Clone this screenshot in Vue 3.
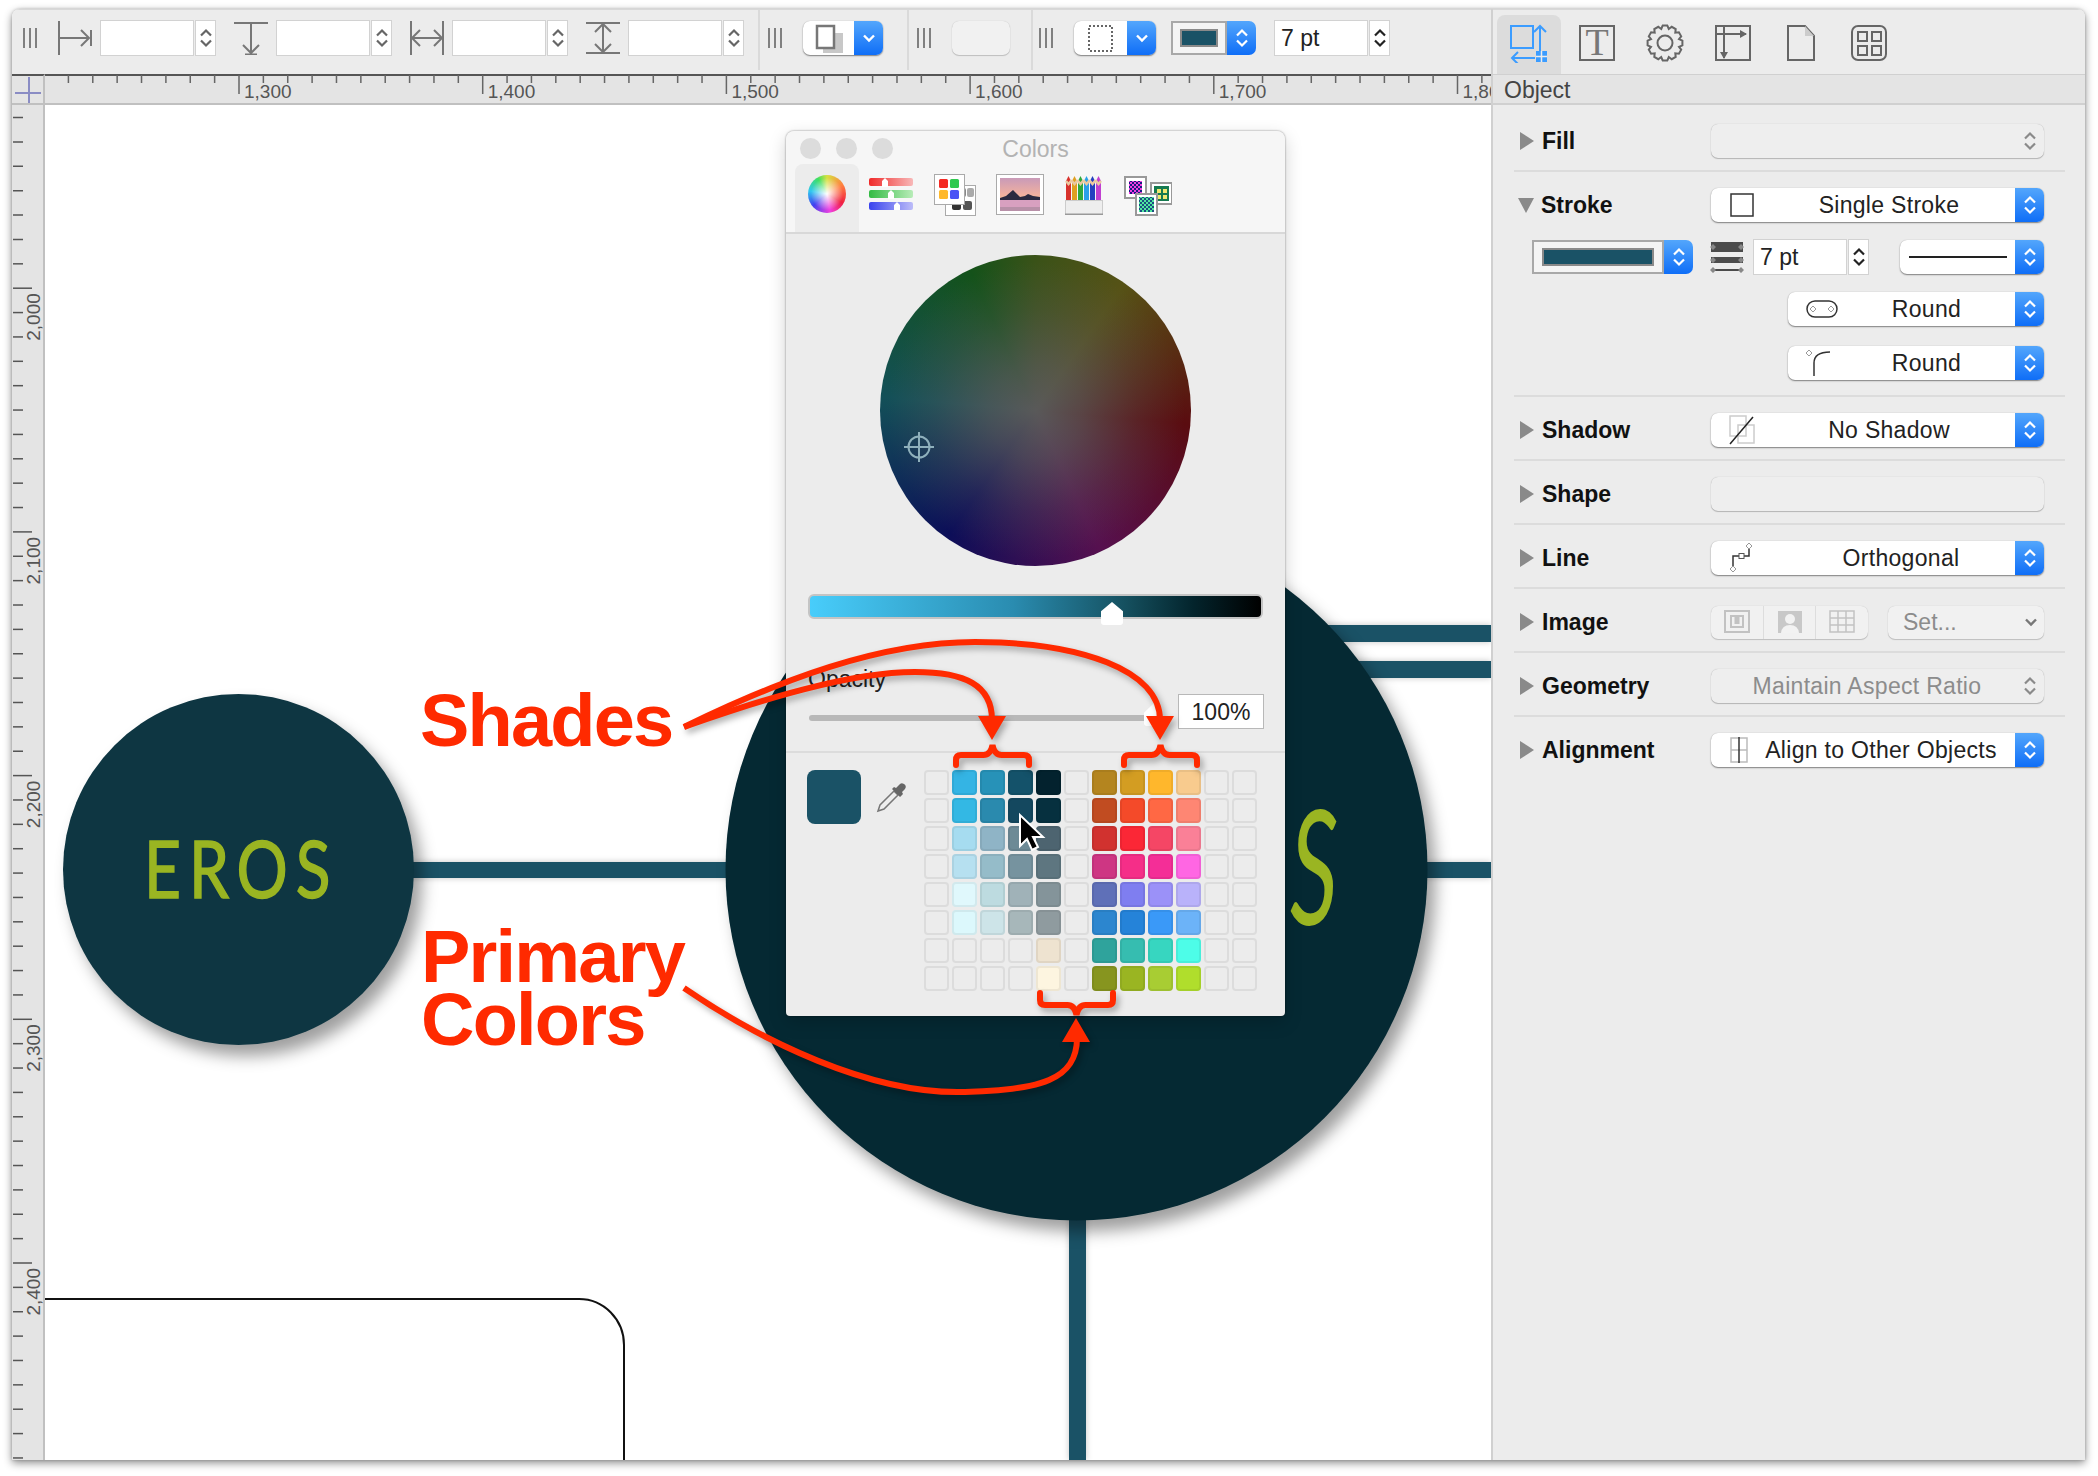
<script setup>
const rulerScale = 2.437

const hTicks = []
for (let u = 1230; u <= 1820; u += 10) {
  hTicks.push({ u, x: 239 + (u - 1300) * rulerScale, major: u % 100 === 0 })
}

const vTicks = []
for (let u = 1930; u <= 2480; u += 10) {
  vTicks.push({ u, y: 1263 + (u - 2400) * rulerScale, major: u % 100 === 0 })
}

const fmt = (n) => n.toLocaleString('en-US')

const spinFields = ['left', 'top', 'width', 'height']

const swatches = [
  ['', '#34b4e4', '#2792b8', '#14526a', '#03222e', '', '#b4851f', '#d39d22', '#ffb72c', '#f8cb8e', '', ''],
  ['', '#33b8e4', '#2a8aae', '#14485f', '#06303f', '', '#c14c21', '#f44a29', '#ff6844', '#fe8673', '', ''],
  ['', '#a6dcf0', '#8fb4c6', '#6d8a96', '#4d6470', '', '#d1322f', '#fb2736', '#f54665', '#fa8097', '', ''],
  ['', '#b6e0f0', '#95bcc9', '#76939f', '#5e7680', '', '#ce3683', '#f52e88', '#f42e97', '#ff66e3', '', ''],
  ['', '#e0f8fc', '#bddbe0', '#a0b2b8', '#84949a', '', '#5f70b8', '#7f7ef0', '#9b91f8', '#b9b2fa', '', ''],
  ['', '#dcf8fc', '#cde4e8', '#a7b7ba', '#8f9b9f', '', '#2c86cf', '#2583d9', '#3a99f8', '#6cb3f8', '', ''],
  ['', '', '', '', '#eee3d0', '', '#2fa39c', '#36bdb0', '#37d6c0', '#4dfde8', '', ''],
  ['', '', '', '', '#fdf5e0', '', '#87951f', '#9ab522', '#a8cd33', '#b0de2c', '', ''],
].flat()

// 12 tooth gear for the inspector tab
function gearPath() {
  const pts = []
  for (let i = 0; i < 12; i++) {
    const a = (i * Math.PI) / 6
    const step = Math.PI / 24
    const p = (r, t) => `${(20 + r * Math.sin(t)).toFixed(1)} ${(20 - r * Math.cos(t)).toFixed(1)}`
    pts.push(p(14.5, a - step * 2), p(17.5, a - step), p(17.5, a + step), p(14.5, a + step * 2))
  }
  return `M${pts.join('L')}Z`
}

function brace(c, half, tip, mid, end) {
  const x0 = c - half
  const x1 = c + half
  const d = mid > end ? 1 : -1
  return `M${x0} ${end}V${mid - d * 5}Q${x0} ${mid} ${x0 + 5} ${mid}H${c - 9}Q${c - 2} ${mid} ${c} ${tip}Q${c + 2} ${mid} ${c + 9} ${mid}H${x1 - 5}Q${x1} ${mid} ${x1} ${mid - d * 5}V${end}`
}

const gear = gearPath()
const braces = [brace(992.5, 36.5, 745, 755, 765), brace(1160.5, 36.5, 745, 755, 765), brace(1076.5, 36.5, 1015, 1005, 993)]
</script>

<template>
  <div class="page">
    <svg class="defs" width="0" height="0">
      <symbol id="updown" viewBox="0 0 16 24">
        <path d="M3 9.500 8 4.500l5 5M3 14.500l5 5 5-5" fill="none" stroke="currentColor" stroke-width="2.200" />
      </symbol>
      <symbol id="chevdown" viewBox="0 0 16 16">
        <path d="M3 5.500 8 10.500l5-5" fill="none" stroke="currentColor" stroke-width="2.400" />
      </symbol>
    </svg>

    <div class="window">
      <div class="main">
        <div class="toolbar">
          <span class="handle" />
          <div v-for="name in spinFields" :key="name" class="spin-group">
            <svg class="tool-icon" width="34" height="34" viewBox="0 0 34 34">
              <g v-if="name === 'left'" fill="none" stroke="#777" stroke-width="2">
                <path d="M1 0v34M1 17h30M23 9l8 8-8 8M33 9v16" />
              </g>
              <g v-else-if="name === 'top'" fill="none" stroke="#777" stroke-width="2">
                <path d="M0 2h34M17 2v30M9 24l8 8 8-8M11 33.500h12" />
              </g>
              <g v-else-if="name === 'width'" fill="none" stroke="#777" stroke-width="2">
                <path d="M1 0v34M33 0v34M2 17h30M10 9l-8 8 8 8M24 9l8 8-8 8" />
              </g>
              <g v-else fill="none" stroke="#777" stroke-width="2">
                <path d="M0 2h34M0 32h34M17 3v28M9 11l8-8 8 8M9 23l8 8 8-8" />
              </g>
            </svg>
            <span class="field" />
            <span class="stepper"><svg width="16" height="32"><use href="#updown" /></svg></span>
          </div>
          <span class="sep sep-first" />
          <span class="handle handle-gap" />
          <div class="popup tool-popup">
            <span class="popup-face">
              <svg width="30" height="30" viewBox="0 0 30 30">
                <rect x="9" y="10" width="20" height="20" fill="#c8c8c8" />
                <rect x="3" y="3" width="17" height="22" fill="#fff" stroke="#777" stroke-width="2.500" />
              </svg>
            </span>
            <span class="popup-blue"><svg width="16" height="16"><use href="#chevdown" /></svg></span>
          </div>
          <span class="sep" />
          <span class="handle handle-gap" />
          <span class="blank-btn" />
          <span class="sep sep-wide" />
          <span class="handle handle-gap" />
          <div class="popup tool-popup tool-popup-dash">
            <span class="popup-face">
              <svg width="30" height="30" viewBox="0 0 30 30">
                <rect x="3" y="3" width="23" height="25" fill="none" stroke="#666" stroke-width="2" stroke-dasharray="2 2" />
              </svg>
            </span>
            <span class="popup-blue"><svg width="16" height="16"><use href="#chevdown" /></svg></span>
          </div>
          <div class="well tool-well">
            <span class="well-face"><i class="well-color" /></span>
            <span class="popup-blue"><svg width="16" height="24"><use href="#updown" /></svg></span>
          </div>
          <span class="field field-pt">7 pt</span>
          <span class="stepper stepper-dark"><svg width="16" height="32"><use href="#updown" /></svg></span>
        </div>

        <div class="ruler-row">
          <div class="ruler-corner"><i class="cross-h" /><i class="cross-v" /></div>
          <svg class="h-ruler" width="1446" height="31" viewBox="45 74 1446 31">
            <rect x="45" y="74" width="1446" height="2" fill="#555" />
            <rect x="45" y="103" width="1446" height="2" fill="#c0c0c0" />
            <g v-for="t in hTicks" :key="t.u">
              <line :x1="t.x" :x2="t.x" y1="75" :y2="t.major ? 94 : 83" stroke="#666" stroke-width="1.500" />
              <text v-if="t.major" :x="t.x + 5" y="98" class="ruler-text">{{ fmt(t.u) }}</text>
            </g>
          </svg>
        </div>

        <div class="work">
          <svg class="v-ruler" width="33" height="1355" viewBox="12 105 33 1355">
            <rect x="43" y="105" width="2" height="1355" fill="#c0c0c0" />
            <g v-for="t in vTicks" :key="t.u">
              <line x1="13" :x2="t.major ? 32 : 23" :y1="t.y" :y2="t.y" stroke="#555" stroke-width="1.500" />
              <text
                v-if="t.major"
                x="40"
                :y="t.y + 5"
                class="ruler-text"
                text-anchor="end"
                :transform="`rotate(-90 40 ${t.y + 5})`"
              >{{ fmt(t.u) }}</text>
            </g>
          </svg>
          <svg class="canvas" width="1446" height="1355" viewBox="45 105 1446 1355">
            <path d="M45 1299H579A45 46 0 0 1 624 1345V1460" fill="none" stroke="#111" stroke-width="2" />
            <g class="line-shadow" fill="#1a5266">
              <rect x="1200" y="625" width="291" height="17" />
              <rect x="1200" y="661" width="291" height="17" />
              <rect x="300" y="862" width="1191" height="16" />
              <rect x="1069" y="1100" width="17" height="360" />
            </g>
            <g class="circle-shadow">
              <circle cx="238.500" cy="869.500" r="175.500" fill="#0e3642" />
              <circle cx="1076.500" cy="869.500" r="351" fill="#052933" />
            </g>
            <text transform="translate(144 898) scale(.8 1)" class="name name-eros" font-size="80">EROS</text>
            <text x="1290" y="925" class="name name-italic" font-size="160" textLength="48" lengthAdjust="spacingAndGlyphs">S</text>
          </svg>
        </div>
      </div>

      <aside class="inspector">
        <div class="tabs">
          <div class="tab tab-on">
            <svg width="40" height="40" viewBox="0 0 40 40" fill="none" stroke="#3b9cff" stroke-width="2">
              <rect x="2" y="3" width="22" height="22" />
              <path d="M31 30V3M25 9l6-6 6 6M26 35H3M9 29l-6 6 6 6" />
              <path d="M27 28h11v11H27z" fill="#3b9cff" stroke="none" />
              <path d="M27 33.500h11M32.500 28v11" stroke="#ececec" stroke-width="1.500" />
            </svg>
          </div>
          <div class="tab">
            <svg width="40" height="40" viewBox="0 0 40 40" fill="none" stroke="#666" stroke-width="2">
              <rect x="3" y="3" width="34" height="34" />
              <text x="20" y="32" class="tab-t" text-anchor="middle">T</text>
            </svg>
          </div>
          <div class="tab">
            <svg width="40" height="40" viewBox="0 0 40 40" fill="none" stroke="#666" stroke-width="2">
              <path :d="gear" />
              <circle cx="20" cy="20" r="7.500" />
            </svg>
          </div>
          <div class="tab">
            <svg width="40" height="40" viewBox="0 0 40 40" fill="none" stroke="#666" stroke-width="2">
              <rect x="3" y="3" width="34" height="34" />
              <path d="M3 11h30M11 3v32" />
              <path d="M27 7l7 4-7 4zM7 29l4 7 4-7z" fill="#666" stroke="none" />
            </svg>
          </div>
          <div class="tab">
            <svg width="40" height="40" viewBox="0 0 40 40" fill="none" stroke="#666" stroke-width="2">
              <path d="M7 3h17l9 10v24H7z" />
              <path d="M24 3v10h9z" fill="#ccc" stroke="none" />
            </svg>
          </div>
          <div class="tab">
            <svg width="40" height="40" viewBox="0 0 40 40" fill="none" stroke="#666" stroke-width="2">
              <rect x="3" y="3" width="34" height="34" rx="6" />
              <rect x="9" y="9" width="9" height="9" />
              <rect x="23" y="9" width="9" height="9" />
              <rect x="9" y="23" width="9" height="9" />
              <rect x="23" y="23" width="9" height="9" />
            </svg>
          </div>
        </div>
        <div class="object-bar">Object</div>

        <section class="row row-first">
          <div class="line-head">
            <i class="tri" /><b>Fill</b>
            <div class="popup popup-off">
              <span class="popup-face" />
              <span class="popup-gray"><svg width="16" height="24"><use href="#updown" /></svg></span>
            </div>
          </div>
        </section>

        <section class="row row-stroke">
          <div class="line-head">
            <i class="tri tri-open" /><b>Stroke</b>
            <div class="popup">
              <span class="popup-face">
                <svg class="pop-icon" width="26" height="26" viewBox="0 0 26 26">
                  <rect x="2" y="2" width="22" height="22" fill="#fff" stroke="#333" stroke-width="1.500" />
                </svg>
                <span class="pop-label pop-shift">Single Stroke</span>
              </span>
              <span class="popup-blue"><svg width="16" height="24"><use href="#updown" /></svg></span>
            </div>
          </div>
          <div class="stroke-tools">
            <div class="well side-well">
              <span class="well-face"><i class="well-color" /></span>
              <span class="popup-blue"><svg width="16" height="24"><use href="#updown" /></svg></span>
            </div>
            <svg class="width-icon" width="34" height="34" viewBox="0 0 34 34">
              <rect x="1" y="2" width="32" height="10" fill="#4b4b4b" />
              <rect x="1" y="17" width="32" height="6" fill="#4b4b4b" />
              <rect x="1" y="29" width="32" height="2" fill="#4b4b4b" />
              <path d="M0 7l3-3 3 3-3 3zM28 7l3-3 3 3-3 3zM0 20l3-3 3 3-3 3zM28 20l3-3 3 3-3 3zM0 30l3-3 3 3-3 3zM28 30l3-3 3 3-3 3z" fill="#888" />
            </svg>
            <span class="field field-side">7 pt</span>
            <span class="stepper stepper-dark stepper-side"><svg width="16" height="32"><use href="#updown" /></svg></span>
            <div class="popup popup-line">
              <span class="popup-face"><i class="solid-line" /></span>
              <span class="popup-blue"><svg width="16" height="24"><use href="#updown" /></svg></span>
            </div>
          </div>
          <div class="popup popup-short">
            <span class="popup-face">
              <svg class="pop-icon" width="32" height="20" viewBox="0 0 32 20">
                <rect x="1" y="2" width="30" height="16" rx="8" fill="none" stroke="#333" stroke-width="1.500" />
                <path d="M7 7l3 3-3 3-3-3zM25 7l3 3-3 3-3-3z" fill="#fff" stroke="#999" />
              </svg>
              <span class="pop-label">Round</span>
            </span>
            <span class="popup-blue"><svg width="16" height="24"><use href="#updown" /></svg></span>
          </div>
          <div class="popup popup-short popup-short-2">
            <span class="popup-face">
              <svg class="pop-icon" width="32" height="26" viewBox="0 0 32 26">
                <path d="M8 26V13Q8 2 24 2" fill="none" stroke="#333" stroke-width="1.500" />
                <path d="M3 0l3 3-3 3-3-3z" fill="#fff" stroke="#999" />
              </svg>
              <span class="pop-label">Round</span>
            </span>
            <span class="popup-blue"><svg width="16" height="24"><use href="#updown" /></svg></span>
          </div>
        </section>

        <section class="row">
          <div class="line-head">
            <i class="tri" /><b>Shadow</b>
            <div class="popup">
              <span class="popup-face">
                <svg class="pop-icon" width="26" height="30" viewBox="0 0 26 30">
                  <rect x="1" y="1" width="16" height="20" fill="none" stroke="#ccc" stroke-width="1.500" />
                  <rect x="9" y="10" width="16" height="18" fill="none" stroke="#ccc" stroke-width="1.500" />
                  <path d="M1 29 24 2" stroke="#222" stroke-width="1.500" />
                </svg>
                <span class="pop-label pop-shift">No Shadow</span>
              </span>
              <span class="popup-blue"><svg width="16" height="24"><use href="#updown" /></svg></span>
            </div>
          </div>
        </section>

        <section class="row">
          <div class="line-head">
            <i class="tri" /><b>Shape</b>
            <div class="popup popup-off"><span class="popup-face" /></div>
          </div>
        </section>

        <section class="row">
          <div class="line-head">
            <i class="tri" /><b>Line</b>
            <div class="popup">
              <span class="popup-face">
                <svg class="pop-icon" width="26" height="30" viewBox="0 0 26 30">
                  <path d="M4 24V13H20V3" fill="none" stroke="#333" stroke-width="1.500" />
                  <rect x="10" y="10.500" width="5" height="5" fill="#fff" stroke="#555" />
                  <path d="M20 0l3 3-3 3-3-3zM4 23l3 3-3 3-3-3z" fill="#fff" stroke="#999" />
                </svg>
                <span class="pop-label pop-shift-wide">Orthogonal</span>
              </span>
              <span class="popup-blue"><svg width="16" height="24"><use href="#updown" /></svg></span>
            </div>
          </div>
        </section>

        <section class="row">
          <div class="line-head">
            <i class="tri" /><b>Image</b>
            <div class="image-tools">
              <div class="segments">
                <span class="segment">
                  <svg width="26" height="24" viewBox="0 0 26 24" fill="none" stroke="#c2c2c2" stroke-width="2">
                    <rect x="1" y="1" width="24" height="21" />
                    <rect x="7" y="6" width="12" height="11" />
                    <path d="M13 7v7" stroke-width="5" />
                  </svg>
                </span>
                <span class="segment">
                  <svg width="26" height="24" viewBox="0 0 26 24">
                    <rect x="1" y="1" width="24" height="22" fill="#c8c8c8" />
                    <circle cx="13" cy="9" r="5" fill="#f2f2f2" />
                    <path d="M4 23q1-8 9-8t9 8z" fill="#f2f2f2" />
                  </svg>
                </span>
                <span class="segment">
                  <svg width="26" height="24" viewBox="0 0 26 24" fill="none" stroke="#c2c2c2" stroke-width="1.500">
                    <path d="M1 1h24v21H1zM1 8h24M1 15h24M9 1v21M17 1v21" />
                  </svg>
                </span>
              </div>
              <div class="set-popup">
                <span>Set...</span>
                <svg width="16" height="16" class="set-chev"><use href="#chevdown" /></svg>
              </div>
            </div>
          </div>
        </section>

        <section class="row">
          <div class="line-head">
            <i class="tri" /><b>Geometry</b>
            <div class="popup popup-off">
              <span class="popup-face"><span class="pop-label pop-off-label">Maintain Aspect Ratio</span></span>
              <span class="popup-gray"><svg width="16" height="24"><use href="#updown" /></svg></span>
            </div>
          </div>
        </section>

        <section class="row row-last">
          <div class="line-head">
            <i class="tri" /><b>Alignment</b>
            <div class="popup">
              <span class="popup-face">
                <svg class="pop-icon" width="20" height="26" viewBox="0 0 20 26" fill="none">
                  <path d="M2 1h16v24H2zM2 13h16" stroke="#bbb" stroke-width="1.500" />
                  <path d="M10 0v26" stroke="#333" stroke-width="1.500" />
                </svg>
                <span class="pop-label pop-align">Align to Other Objects</span>
              </span>
              <span class="popup-blue"><svg width="16" height="24"><use href="#updown" /></svg></span>
            </div>
          </div>
        </section>
      </aside>
    </div>

    <div class="colors">
      <div class="colors-head">
        <div class="title-bar">
          <i class="light" /><i class="light" /><i class="light" />
          <span class="title">Colors</span>
        </div>
        <div class="color-tabs">
          <div class="ctab ctab-on"><i class="mini-wheel" /></div>
          <svg class="ctab-icon" width="44" height="32" viewBox="0 0 44 32">
            <rect y="0" width="44" height="8" rx="2" fill="url(#mixRed)" />
            <rect y="12" width="44" height="8" rx="2" fill="url(#mixGreen)" />
            <rect y="24" width="44" height="8" rx="2" fill="url(#mixBlue)" />
            <defs>
              <linearGradient id="mixRed"><stop stop-color="#f02a2a" /><stop offset="1" stop-color="#f8b8b8" /></linearGradient>
              <linearGradient id="mixGreen"><stop stop-color="#33bb44" /><stop offset="1" stop-color="#b8ecb8" /></linearGradient>
              <linearGradient id="mixBlue"><stop stop-color="#3a44ee" /><stop offset="1" stop-color="#bcbcf8" /></linearGradient>
            </defs>
            <path d="M13 3l3-3 3 3v6h-6zM19 15l3-3 3 3v6h-6zM25 27l3-3 3 3v5h-6z" fill="#fff" />
          </svg>
          <svg class="ctab-icon ctab-palette" width="42" height="42" viewBox="0 0 42 42">
            <rect x="11.500" y="11.500" width="30" height="30" fill="#fff" stroke="#aaa" />
            <rect x="23" y="14" width="9" height="9" rx="2" fill="#888" />
            <rect x="33" y="14" width="7" height="9" rx="2" fill="#aaa" />
            <rect x="18" y="27" width="9" height="9" rx="2" fill="#333" />
            <rect x="29" y="27" width="9" height="9" rx="2" fill="#555" />
            <rect x=".500" y=".500" width="30" height="30" fill="#fff" stroke="#aaa" />
            <rect x="5" y="5" width="9" height="9" rx="1.500" fill="#f42a24" />
            <rect x="16" y="5" width="9" height="9" rx="1.500" fill="#2fc94e" />
            <rect x="5" y="16" width="9" height="9" rx="1.500" fill="#ffb82a" />
            <rect x="16" y="16" width="9" height="9" rx="1.500" fill="#4a54f5" />
          </svg>
          <svg class="ctab-icon ctab-photo" width="48" height="41" viewBox="0 0 48 41">
            <defs>
              <linearGradient id="sky" x2="0" y2="1"><stop stop-color="#c99ab8" /><stop offset=".5" stop-color="#f0b0a0" /><stop offset=".7" stop-color="#f8c090" /></linearGradient>
            </defs>
            <rect x=".500" y=".500" width="47" height="40" fill="#fff" stroke="#aaa" />
            <rect x="4" y="4" width="40" height="33" fill="url(#sky)" />
            <path d="M4 24l6-2 7-6 7 7 5-1 3-2 5 2 7 1v4H4z" fill="#2a2a40" />
            <rect x="4" y="26" width="40" height="11" fill="#d8a0c0" />
            <rect x="4" y="33" width="40" height="4" fill="#b890a8" />
          </svg>
          <svg class="ctab-icon ctab-pencils" width="38" height="39" viewBox="0 0 38 39">
            <g>
              <path d="M1 26V5l2.500-5L6 5v21z" fill="#d8322c" />
              <path d="M7 26V5l2.500-5L12 5v21z" fill="#dfa020" />
              <path d="M13 26V5l2.500-5L18 5v21z" fill="#30a83c" />
              <path d="M19 26V5l2.500-5L24 5v21z" fill="#2aa0e8" />
              <path d="M25 26V5l2.500-5L30 5v21z" fill="#2440c0" />
              <path d="M31 26V5l2.500-5L36 5v21z" fill="#c040d0" />
              <path d="M1 5l2.500 3L6 5l1 0 2.500 3L12 5l1 0 2.500 3L18 5l1 0 2.500 3L24 5l1 0 2.500 3L30 5l1 0 2.500 3L36 5" fill="none" stroke="#eac8a0" stroke-width="2.500" />
            </g>
            <rect x=".500" y="24.500" width="37" height="14" fill="#eee" stroke="#ccc" />
            <rect x="0" y="37.500" width="38" height="1.500" fill="#999" />
          </svg>
          <svg class="ctab-icon ctab-patterns" width="48" height="40" viewBox="0 0 48 40">
            <defs>
              <pattern id="dots1" width="4" height="4" patternUnits="userSpaceOnUse"><rect width="4" height="4" fill="#1a1a80" /><rect width="2" height="2" fill="#f040e0" /><rect x="2" y="2" width="2" height="2" fill="#f040e0" /></pattern>
              <pattern id="dots2" width="4" height="4" patternUnits="userSpaceOnUse"><rect width="4" height="4" fill="#1a5080" /><rect width="2" height="2" fill="#50e8a0" /><rect x="2" y="2" width="2" height="2" fill="#50e8a0" /></pattern>
            </defs>
            <rect x="1" y="1" width="21" height="21" fill="#fff" stroke="#999" stroke-width="2" />
            <rect x="5" y="5" width="13" height="13" fill="url(#dots1)" />
            <rect x="27" y="7" width="21" height="21" fill="#fff" stroke="#999" stroke-width="2" />
            <rect x="30" y="10" width="15" height="15" fill="#167a50" />
            <path d="M33 13h4v4h-4zM39 13h4v4h-4zM33 19h4v4h-4zM39 19h4v4h-4z" fill="#f0e870" />
            <rect x="12" y="18" width="21" height="21" fill="#fff" stroke="#999" stroke-width="2" />
            <rect x="15" y="21" width="15" height="15" fill="url(#dots2)" />
          </svg>
        </div>
      </div>

      <div class="wheel">
        <svg class="crosshair" width="30" height="30" viewBox="0 0 30 30" fill="none" stroke="#8fb0bc" stroke-width="2">
          <circle cx="15" cy="15" r="10.500" />
          <path d="M15 0v30M0 15h30" />
        </svg>
      </div>
      <div class="value-slider"><i class="value-thumb" /></div>

      <div class="opacity-label">Opacity</div>
      <div class="opacity-row">
        <div class="opacity-track"><i class="opacity-thumb" /></div>
        <span class="opacity-input">100%</span>
      </div>

      <div class="swatch-area">
        <span class="current" />
        <svg class="dropper" width="32" height="32" viewBox="0 0 32 32">
          <path d="M2 30l2-6L18 10l4 4L8 28z" fill="#eee" stroke="#777" stroke-width="1.500" />
          <path d="M16 8l8 8 3-3-1-2 3-3q2-3-1-5t-5 1l-3 3-2-1z" fill="#666" />
        </svg>
        <div class="swatch-grid">
          <span
            v-for="(color, i) in swatches"
            :key="i"
            class="swatch"
            :class="{ filled: color }"
            :style="color ? { backgroundColor: color } : null"
          />
        </div>
      </div>
    </div>

    <svg class="marks" width="2098" height="1476" viewBox="0 0 2098 1476">
      <g class="ink">
        <text x="420" y="746" class="note">Shades</text>
        <text x="421" y="982" class="note">Primary</text>
        <text x="421" y="1045" class="note">Colors</text>
      </g>
      <g class="ink-shadow" fill="none" stroke="#ff2a00" stroke-width="6">
        <path d="M684 727C760 700 850 672 915 672C965 672 992 685 992 720" />
        <path d="M684 727C780 680 880 642 975 642C1080 642 1160 670 1160 720" />
        <path d="M684 988C760 1040 870 1095 965 1092C1040 1090 1077 1080 1077 1038" />
        <path v-for="b in braces" :key="b" :d="b" stroke-linecap="round" />
        <path d="M992 740l-14-24h28zM1160 740l-14-24h28zM1076 1018l-14 24h28z" fill="#ff2a00" stroke="none" />
      </g>
      <path d="M1020 815V846l7-7 5 11 6-3-5-10h10z" fill="#000" stroke="#fff" stroke-width="2" />
    </svg>
  </div>
</template>

<style scoped>
.page {
  position: relative;
  width: 2098px;
  height: 1476px;
  box-sizing: border-box;
  padding: 9px 13px 16px 12px;
  overflow: hidden;
  background: #fff;
  color: #222;
  font-family: "Liberation Sans", Arial, sans-serif;
}

.defs {
  position: absolute;
}

.window {
  display: flex;
  height: 1451px;
  overflow: hidden;
  border-radius: 8px 8px 0 0;
  box-shadow: 0 3px 8px rgba(0, 0, 0, 0.45), 0 0 3px rgba(0, 0, 0, 0.2);
}

.main {
  width: 1479px;
}

.toolbar {
  display: flex;
  align-items: center;
  height: 65px;
  box-sizing: border-box;
  padding: 0 0 9px 11px;
  background: #ececec;
  border-top: 1px solid #d8d8d8;
}

.handle {
  flex: none;
  width: 14px;
  height: 20px;
  margin-right: 21px;
  background: repeating-linear-gradient(90deg, #808080 0 2px, transparent 2px 6px);
}

.handle-gap {
  margin-left: 8px;
}

.spin-group {
  display: flex;
  align-items: center;
  width: 176px;
}

.tool-icon {
  flex: none;
  margin-right: 8px;
}

.field {
  flex: none;
  display: block;
  box-sizing: border-box;
  width: 94px;
  height: 36px;
  background: #fff;
  border: 1.5px solid #d2d2d2;
}

.stepper {
  flex: none;
  display: flex;
  align-items: center;
  justify-content: center;
  box-sizing: border-box;
  width: 21px;
  height: 36px;
  margin-left: 1px;
  background: #fff;
  border: 1.5px solid #d2d2d2;
  color: #666;
}

.stepper-dark {
  color: #222;
}

.sep {
  flex: none;
  align-self: flex-start;
  width: 2px;
  height: 60px;
  background: #dadada;
}

.sep-first {
  margin-left: -4px;
}

.sep-wide {
  margin-left: 21px;
  margin-right: -2px;
}

.popup {
  position: relative;
  display: flex;
  width: 333px;
  height: 34px;
  margin-left: auto;
  overflow: hidden;
  background: #fff;
  border-radius: 7px;
  box-shadow: 0 1px 1.5px rgba(0, 0, 0, 0.45), 0 0 1px rgba(0, 0, 0, 0.25);
}

.popup-face {
  flex: 1;
  display: flex;
  align-items: center;
  min-width: 0;
}

.popup-blue {
  flex: none;
  display: flex;
  align-items: center;
  justify-content: center;
  width: 29px;
  color: #fff;
  background: linear-gradient(#53a6fc, #0f6ef7);
}

.popup-gray {
  flex: none;
  display: flex;
  align-items: center;
  justify-content: center;
  width: 29px;
  color: #8a8a8a;
}

.popup-off {
  background: #eeeeee;
  box-shadow: 0 1px 1px rgba(0, 0, 0, 0.22), 0 0 1px rgba(0, 0, 0, 0.25);
}

.tool-popup {
  flex: none;
  width: 80px;
  height: 34px;
  margin-left: 0;
  margin-right: 24px;
}

.tool-popup .popup-face {
  justify-content: center;
}

.tool-popup .popup-blue {
  width: 29px;
}

.tool-popup-dash {
  width: 82px;
  margin-right: 15px;
}

.tool-popup-dash .popup-blue {
  width: 29px;
}

.blank-btn {
  flex: none;
  width: 58px;
  height: 34px;
  background: #f1f1f1;
  border-radius: 7px;
  box-shadow: 0 1px 1px rgba(0, 0, 0, 0.18), 0 0 1px rgba(0, 0, 0, 0.2);
}

.well {
  flex: none;
  display: flex;
  height: 34px;
  overflow: hidden;
  border-radius: 0 7px 7px 0;
}

.well-face {
  flex: 1;
  display: flex;
  align-items: center;
  justify-content: center;
  box-sizing: border-box;
  background: #f4f4f4;
  border: 2.5px solid #a8a8a8;
}

.well-color {
  display: block;
  box-sizing: border-box;
  background: #1a5266;
  border: 2.5px solid #8a8a8a;
}

.tool-well {
  width: 85px;
  margin-right: 18px;
}

.tool-well .well-color {
  width: 38px;
  height: 18px;
}

.field-pt,
.field-side {
  padding-left: 6px;
  font-size: 23px;
  line-height: 35px;
}

.ruler-row {
  display: flex;
  height: 31px;
}

.ruler-corner {
  position: relative;
  width: 33px;
  background: #e4e4e4;
  border-top: 2px solid #555;
  border-right: 2px solid #c0c0c0;
  border-bottom: 2px solid #c0c0c0;
  box-sizing: border-box;
}

.cross-h {
  position: absolute;
  top: 16px;
  left: 3px;
  width: 26px;
  height: 1.5px;
  background: #8a8cc4;
}

.cross-v {
  position: absolute;
  top: 1px;
  left: 16px;
  width: 1.5px;
  height: 26px;
  background: #8a8cc4;
}

.h-ruler {
  display: block;
  flex: none;
  background: #e4e4e4;
}

.ruler-text {
  fill: #555;
  font-size: 19px;
}

.work {
  display: flex;
  height: 1355px;
}

.v-ruler {
  display: block;
  flex: none;
  background: #e4e4e4;
}

.canvas {
  display: block;
  flex: none;
  background: #fff;
}

.line-shadow {
  filter: drop-shadow(0 0 3px rgba(0, 0, 0, 0.22));
}

.circle-shadow circle {
  filter: drop-shadow(8px 11px 8px rgba(0, 0, 0, 0.38));
}

.name {
  fill: #9ab522;
  font-family: Lato, "Liberation Sans", sans-serif;
}

.name-eros {
  letter-spacing: 10px;
  stroke: #9ab522;
  stroke-width: 1.5px;
}

.name-italic {
  font-style: italic;
}

.inspector {
  flex: none;
  width: 594px;
  box-sizing: border-box;
  background: #ececec;
  border-left: 2px solid #d0d0d0;
}

.tabs {
  display: flex;
  gap: 4px;
  height: 65px;
  box-sizing: border-box;
  padding: 5px 0 0 4px;
  border-top: 1px solid #d8d8d8;
}

.tab {
  display: flex;
  align-items: center;
  justify-content: center;
  width: 64px;
  height: 59px;
  padding-bottom: 3px;
  box-sizing: border-box;
}

.tab-on {
  background: #dcdcdc;
  border-radius: 8px 8px 0 0;
}

.tab-t {
  fill: #777;
  stroke: none;
  font-family: "Liberation Serif", serif;
  font-size: 38px;
}

.object-bar {
  height: 31px;
  box-sizing: border-box;
  padding-left: 11px;
  background: #e4e4e4;
  border-top: 1.5px solid #d0d0d0;
  border-bottom: 2px solid #d0d0d0;
  color: #444;
  font-size: 23px;
  line-height: 30px;
}

.row {
  margin: 0 20px 0 21px;
  padding: 16px 0 12px;
  border-bottom: 2px solid #dcdcdc;
}

.row-first {
  padding-top: 19px;
}

.row-last {
  border-bottom: 0;
}

.row-stroke {
  padding-bottom: 15px;
}

.line-head {
  display: flex;
  align-items: center;
  height: 34px;
}

.line-head b {
  margin-left: 8px;
  color: #111;
  font-size: 23px;
}

.line-head .popup {
  margin-right: 21px;
}

.tri {
  display: block;
  width: 0;
  height: 0;
  margin-left: 6px;
  border-top: 9px solid transparent;
  border-bottom: 9px solid transparent;
  border-left: 14px solid #8a8a8a;
}

.tri-open {
  margin-left: 4px;
  margin-right: -1px;
  border-top: 15px solid #8a8a8a;
  border-right: 8.5px solid transparent;
  border-bottom: 0;
  border-left: 8.5px solid transparent;
}

.pop-icon {
  flex: none;
  margin-left: 18px;
}

.pop-label {
  flex: 1;
  font-size: 23px;
  letter-spacing: 0.3px;
  text-align: center;
}

.pop-shift {
  padding-left: 8px;
}

.pop-shift-wide {
  padding-left: 32px;
}

.pop-align {
  margin-left: -2px;
}

.pop-off-label {
  color: #8c8c8c;
  padding-left: 8px;
}

.stroke-tools {
  display: flex;
  align-items: center;
  height: 36px;
  margin-top: 17px;
  padding-left: 18px;
}

.side-well {
  width: 161px;
}

.side-well .well-color {
  width: 112px;
  height: 18px;
}

.width-icon {
  flex: none;
  margin-left: 17px;
}

.field-side {
  margin-left: 9px;
}

.popup-line {
  width: 144px;
  height: 34px;
  margin-left: 31px;
}

.popup-line .popup-face {
  justify-content: center;
}

.solid-line {
  display: block;
  width: 98px;
  height: 2px;
  background: #222;
}

.popup-short {
  width: 256px;
  margin-top: 17px;
  margin-right: 21px;
}

.popup-short-2 {
  margin-top: 20px;
}

.image-tools {
  display: flex;
  gap: 20px;
  margin-left: auto;
  margin-right: 21px;
}

.segments {
  display: flex;
  width: 157px;
  height: 33px;
  overflow: hidden;
  background: #f1f1f1;
  border-radius: 7px;
  box-shadow: 0 1px 1px rgba(0, 0, 0, 0.18), 0 0 1px rgba(0, 0, 0, 0.2);
}

.segment {
  flex: 1;
  display: flex;
  align-items: center;
  justify-content: center;
  border-left: 1px solid #ddd;
}

.segment:first-child {
  border-left: 0;
}

.set-popup {
  display: flex;
  align-items: center;
  justify-content: space-between;
  box-sizing: border-box;
  width: 156px;
  height: 33px;
  padding: 0 5px 0 15px;
  background: #f1f1f1;
  border-radius: 7px;
  box-shadow: 0 1px 1px rgba(0, 0, 0, 0.18), 0 0 1px rgba(0, 0, 0, 0.2);
  color: #8c8c8c;
  font-size: 23px;
}

.set-chev {
  color: #777;
}

.colors {
  position: absolute;
  top: 131px;
  left: 786px;
  width: 499px;
  height: 885px;
  box-sizing: border-box;
  background: #ececec;
  border-radius: 8px 8px 4px 4px;
  box-shadow: 0 0 2px rgba(0, 0, 0, 0.5), 0 6px 18px rgba(0, 0, 0, 0.18);
}

.colors-head {
  height: 103px;
  box-sizing: border-box;
  overflow: hidden;
  background: #f6f6f6;
  border-bottom: 2px solid #d8d8d8;
  border-radius: 8px 8px 0 0;
}

.title-bar {
  position: relative;
  display: flex;
  gap: 15px;
  align-items: center;
  height: 33px;
  padding: 1px 0 0 14px;
  box-sizing: border-box;
}

.light {
  display: block;
  width: 21px;
  height: 21px;
  background: #dcdcdc;
  border-radius: 50%;
}

.title {
  position: absolute;
  top: 5px;
  right: 0;
  left: 0;
  color: #b3b3b3;
  font-size: 23px;
  text-align: center;
}

.color-tabs {
  display: flex;
  align-items: flex-start;
  height: 69px;
  padding-left: 9px;
}

.ctab {
  flex: none;
  display: flex;
  align-items: center;
  justify-content: center;
  width: 64px;
  height: 69px;
}

.ctab-on {
  background: #ececec;
  border-radius: 8px 8px 0 0;
}

.mini-wheel {
  display: block;
  width: 38px;
  height: 38px;
  margin-top: -9px;
  border-radius: 50%;
  background:
    radial-gradient(circle closest-side, #fff 0, rgba(255, 255, 255, 0) 85%),
    conic-gradient(#d8e040, #ff8040, #f02040 120deg, #f040e0 170deg, #4040f0 230deg, #30c8f0 280deg, #40e060 330deg, #d8e040);
}

.ctab-icon {
  flex: none;
  display: block;
  margin-top: 14px;
  margin-left: 10px;
}

.ctab-palette {
  margin-top: 10px;
  margin-left: 21px;
}

.ctab-photo {
  margin-top: 10px;
  margin-left: 20px;
}

.ctab-pencils {
  margin-top: 12px;
  margin-left: 21px;
}

.ctab-patterns {
  margin-top: 12px;
  margin-left: 21px;
}

.wheel {
  position: relative;
  width: 311px;
  height: 311px;
  margin: 21px auto 0;
  border-radius: 50%;
  background:
    radial-gradient(circle closest-side, #595959 0, rgba(89, 89, 89, 0.72) 30%, rgba(89, 89, 89, 0.3) 65%, rgba(89, 89, 89, 0) 96%),
    conic-gradient(#3a5218, #565216 35deg, #5a0c10 95deg, #56104f 155deg, #0c0e58 215deg, #135058 275deg, #14521a 335deg, #3a5218);
}

.crosshair {
  position: absolute;
  top: 177px;
  left: 24px;
}

.value-slider {
  position: relative;
  box-sizing: border-box;
  height: 25px;
  margin: 28px 22px 0;
  background: linear-gradient(90deg, #48cdfb, #2a8cb0 45%, #15505f 70%, #03242c 85%, #000);
  border: 2.5px solid #c4c4c4;
  border-radius: 6px;
}

.value-thumb {
  position: absolute;
  top: 6px;
  left: 291px;
  width: 22px;
  height: 23px;
  background: #fff;
  border-radius: 3px;
  clip-path: polygon(50% 0, 100% 40%, 100% 100%, 0 100%, 0 40%);
}

.opacity-label {
  margin: 47px 0 0 22px;
  font-size: 23px;
  line-height: 27px;
}

.opacity-row {
  display: flex;
  align-items: center;
  height: 35px;
  margin: 1px 21px 0 23px;
}

.opacity-track {
  position: relative;
  flex: none;
  width: 345px;
  height: 6px;
  margin-top: 13px;
  background: #b8b8b8;
  border-radius: 3px;
}

.opacity-thumb {
  position: absolute;
  top: -11px;
  right: -8px;
  width: 18px;
  height: 22px;
  background: #fff;
  border-radius: 3px;
  clip-path: polygon(50% 0, 100% 40%, 100% 100%, 0 100%, 0 40%);
}

.opacity-input {
  flex: none;
  box-sizing: border-box;
  width: 86px;
  height: 35px;
  margin-left: auto;
  background: #fff;
  border: 1.5px solid #b8b8b8;
  font-size: 23px;
  line-height: 34px;
  text-align: center;
}

.swatch-area {
  display: flex;
  align-items: flex-start;
  margin-top: 22px;
  padding: 17px 0 0 21px;
  border-top: 2px solid #dcdcdc;
}

.current {
  flex: none;
  display: block;
  width: 54px;
  height: 54px;
  background: #1a5266;
  border-radius: 8px;
}

.dropper {
  flex: none;
  margin: 11px 0 0 15px;
}

.swatch-grid {
  display: grid;
  grid-template-columns: repeat(12, 25px);
  gap: 3px;
  margin-left: 16px;
}

.swatch {
  display: block;
  box-sizing: border-box;
  height: 25px;
  background: #ececec;
  border: 2px solid #dcdcdc;
  border-radius: 4px;
}

.swatch.filled {
  border-color: rgba(0, 0, 0, 0.06);
}

.marks {
  position: absolute;
  top: 0;
  left: 0;
  pointer-events: none;
}

.note {
  fill: #ff2a00;
  font-family: "Liberation Sans", Arial, sans-serif;
  font-size: 74px;
  font-weight: 700;
  letter-spacing: -1.8px;
}

.ink-shadow {
  filter: drop-shadow(3px 4px 3px rgba(0, 0, 0, 0.3));
}
</style>
